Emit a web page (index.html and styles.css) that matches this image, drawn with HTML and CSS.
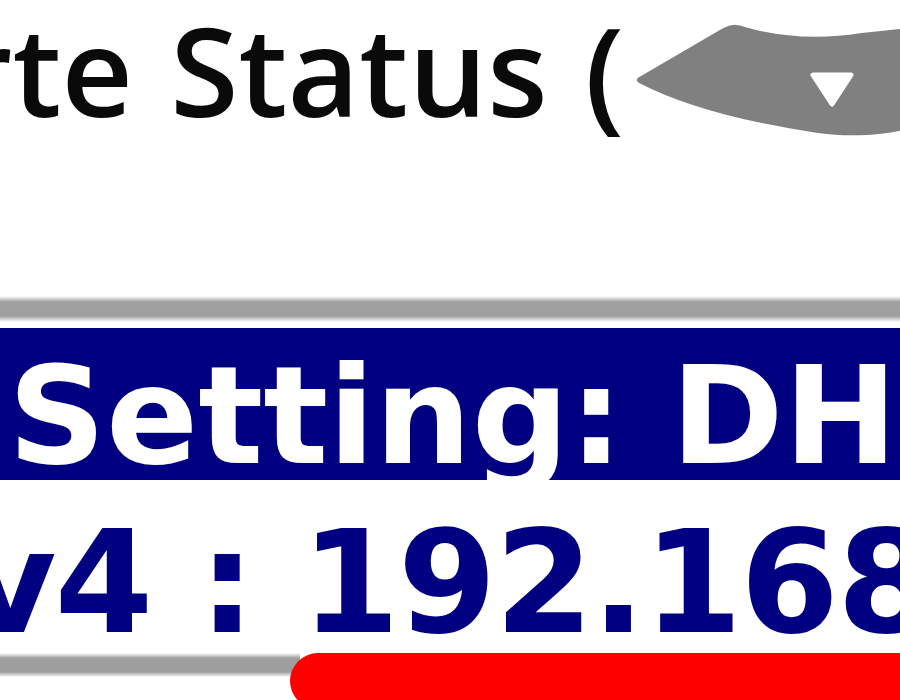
FILE: index.html
```html
<!DOCTYPE html>
<html lang="de">
<head>
<meta charset="utf-8">
<title>Status</title>
<link rel="stylesheet" href="styles.css">
</head>
<body>
<div class="page">
  <div class="title-row">
    <span class="title">rte Status (</span>
    <svg class="select" viewBox="0 0 270 140" width="270" height="140" aria-hidden="true">
      <path class="select-body" d="M10,80 L94,31 Q104,25 114,30 Q170,46 232,36 L280,31 L280,125 C250,134 212,134 182,129 C130,121 60,106 10,80 Z"/>
      <path class="select-arrow" d="M183,75 L221,75 L202,104 Z"/>
    </svg>
  </div>
  <div class="rule"></div>
  <div class="setting"><span>Setting: DHCP</span></div>
  <div class="ip">v4 : 192.168.1.1</div>
  <div class="track">
    <div class="track-line"></div>
    <div class="track-fill"></div>
  </div>
</div>
</body>
</html>
```

FILE: styles.css
```css
html, body {
  margin: 0;
  padding: 0;
  background: #ffffff;
}

html {
  overflow: hidden;
}

body {
  width: 900px;
  height: 700px;
  overflow: hidden;
}

.page {
  width: 900px;
  height: 700px;
  overflow: hidden;
}

.title-row {
  display: flex;
  align-items: flex-start;
  height: 140px;
}

.title {
  flex-shrink: 0;
  margin-left: -41px;
  font-family: "Open Sans", "Noto Sans", sans-serif;
  font-weight: 600;
  font-size: 124px;
  line-height: 138px;
  word-spacing: 5px;
  color: #0a0a0a;
  white-space: nowrap;
}

.select {
  flex-shrink: 0;
  margin-left: auto;
  display: block;
}

.select-body {
  fill: #808080;
  stroke: #808080;
  stroke-width: 6;
  stroke-linejoin: round;
}

.select-arrow {
  fill: #ffffff;
  stroke: #ffffff;
  stroke-width: 5;
  stroke-linejoin: round;
}

.rule {
  margin-top: 156px;
  height: 26px;
  background: linear-gradient(to bottom,
    rgba(160,160,160,0) 0px,
    #a0a0a0 6px,
    #9e9e9e 20px,
    rgba(160,160,160,0) 26px);
}

.setting {
  margin-top: 6px;
  height: 152px;
  background: #000080;
  padding-left: 8px;
  font-family: "DejaVu Sans", "Verdana", sans-serif;
  font-weight: bold;
  font-size: 136px;
  line-height: 176px;
  color: #ffffff;
  white-space: nowrap;
  overflow: visible;
}

.ip {
  margin-top: 33px;
  margin-left: -36px;
  font-family: "DejaVu Sans", "Verdana", sans-serif;
  font-weight: bold;
  font-size: 142px;
  letter-spacing: -2px;
  line-height: 140px;
  color: #000080;
  white-space: nowrap;
}

.track {
  display: flex;
  align-items: flex-start;
  height: 47px;
  overflow: hidden;
}

.track-line {
  flex: 0 0 300px;
  height: 24px;
  background: linear-gradient(to bottom,
    rgba(160,160,160,0) 0px,
    #a0a0a0 5px,
    #9e9e9e 19px,
    rgba(160,160,160,0) 24px);
}

.track-fill {
  flex: 1;
  margin-left: -10px;
  height: 56px;
  background: #ff0000;
  border-radius: 28px 0 0 28px;
}
```
